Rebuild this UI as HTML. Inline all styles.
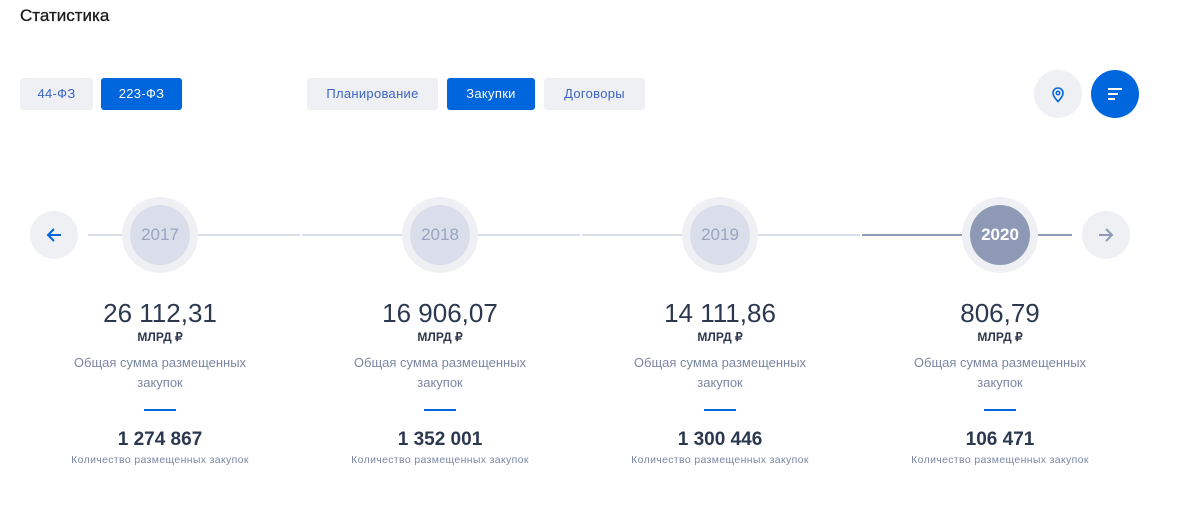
<!DOCTYPE html><html><head><meta charset="utf-8"><style>
*{margin:0;padding:0;box-sizing:border-box}
body{width:1192px;height:518px;background:#fff;font-family:"Liberation Sans",sans-serif;position:relative;overflow:hidden;color:#2c3850}
.a{position:absolute}
h1{position:absolute;left:20px;top:6px;font-size:17px;font-weight:normal;color:#1c1c1c;-webkit-text-stroke:0.3px #1c1c1c}
.btn{position:absolute;top:78px;height:32px;border-radius:3px;font-size:13px;line-height:32px;text-align:center;background:#eef0f3;color:#3c63c4;letter-spacing:.3px}
.act{background:#0066de;color:#fff}
.rb{position:absolute;width:48px;height:48px;border-radius:50%;background:#eef0f3}
.line{position:absolute;top:234px;height:2px;background:#d9dde6}
.yo{position:absolute;top:197px;width:76px;height:76px;border-radius:50%;background:#eef0f3}
.yi{position:absolute;left:8px;top:8px;width:60px;height:60px;border-radius:50%;background:#d9deea;color:#99a4bf;font-size:17px;line-height:60px;text-align:center}
.col{position:absolute;top:296px;width:240px;text-align:center}
.n{font-size:26px;line-height:34px;color:#2c3850}
.m{font-size:12px;font-weight:bold;line-height:14px;margin-top:0}
.d{font-size:13px;color:#7b87a3;line-height:20px;margin-top:9px}
.bl{width:32px;height:2px;background:#0066de;margin:16px auto 0}
.c{font-size:19px;font-weight:bold;line-height:24px;margin-top:17px}
.l{font-size:10.5px;color:#7b87a3;line-height:12px;margin-top:2px;letter-spacing:.35px;white-space:nowrap;margin-left:-20px;margin-right:-20px}
</style></head><body>
<h1>Статистика</h1>
<div class="btn" style="left:20px;width:73px">44-ФЗ</div>
<div class="btn act" style="left:101px;width:81px">223-ФЗ</div>
<div class="btn" style="left:307px;width:131px">Планирование</div>
<div class="btn act" style="left:447px;width:88px">Закупки</div>
<div class="btn" style="left:544px;width:101px">Договоры</div>
<div class="rb" style="left:1034px;top:70px"><svg class="a" style="left:16px;top:15px" width="16" height="18" viewBox="0 0 16 18"><path d="M8 16.5C5 13.5 3 11 3 8a5 5 0 0 1 10 0c0 3-2 5.5-5 8.5z" fill="none" stroke="#0066de" stroke-width="1.6"/><circle cx="8" cy="8" r="1.8" fill="none" stroke="#0066de" stroke-width="1.5"/></svg></div>
<div class="rb" style="left:1091px;top:70px;background:#0066de"><svg class="a" style="left:16px;top:17px" width="16" height="14"><path d="M1 2h14M1 7h10M1 12h7" stroke="#fff" stroke-width="2"/></svg></div>
<div class="line" style="left:88px;width:212px"></div>
<div class="line" style="left:302px;width:278px"></div>
<div class="line" style="left:582px;width:278px"></div>
<div class="line" style="left:862px;width:210px;background:#8e9ab5"></div>
<div class="rb" style="left:30px;top:211px"><svg class="a" style="left:16px;top:16px" width="16" height="16"><path d="M15 8H2M8 2L2 8l6 6" fill="none" stroke="#0066de" stroke-width="2"/></svg></div>
<div class="rb" style="left:1082px;top:211px"><svg class="a" style="left:16px;top:16px" width="16" height="16"><path d="M1 8h13M8 2l6 6-6 6" fill="none" stroke="#8e9ab5" stroke-width="2"/></svg></div>
<div class="yo" style="left:122px"><div class="yi">2017</div></div>
<div class="yo" style="left:402px"><div class="yi">2018</div></div>
<div class="yo" style="left:682px"><div class="yi">2019</div></div>
<div class="yo" style="left:962px"><div class="yi" style="background:#8e9ab5;color:#fff;font-weight:bold">2020</div></div>
<div class="col" style="left:40px"><div class="n">26 112,31</div><div class="m">МЛРД ₽</div><div class="d">Общая сумма размещенных<br>закупок</div><div class="bl"></div><div class="c">1 274 867</div><div class="l">Количество размещенных закупок</div></div>
<div class="col" style="left:320px"><div class="n">16 906,07</div><div class="m">МЛРД ₽</div><div class="d">Общая сумма размещенных<br>закупок</div><div class="bl"></div><div class="c">1 352 001</div><div class="l">Количество размещенных закупок</div></div>
<div class="col" style="left:600px"><div class="n">14 111,86</div><div class="m">МЛРД ₽</div><div class="d">Общая сумма размещенных<br>закупок</div><div class="bl"></div><div class="c">1 300 446</div><div class="l">Количество размещенных закупок</div></div>
<div class="col" style="left:880px"><div class="n">806,79</div><div class="m">МЛРД ₽</div><div class="d">Общая сумма размещенных<br>закупок</div><div class="bl"></div><div class="c">106 471</div><div class="l">Количество размещенных закупок</div></div>
</body></html>
